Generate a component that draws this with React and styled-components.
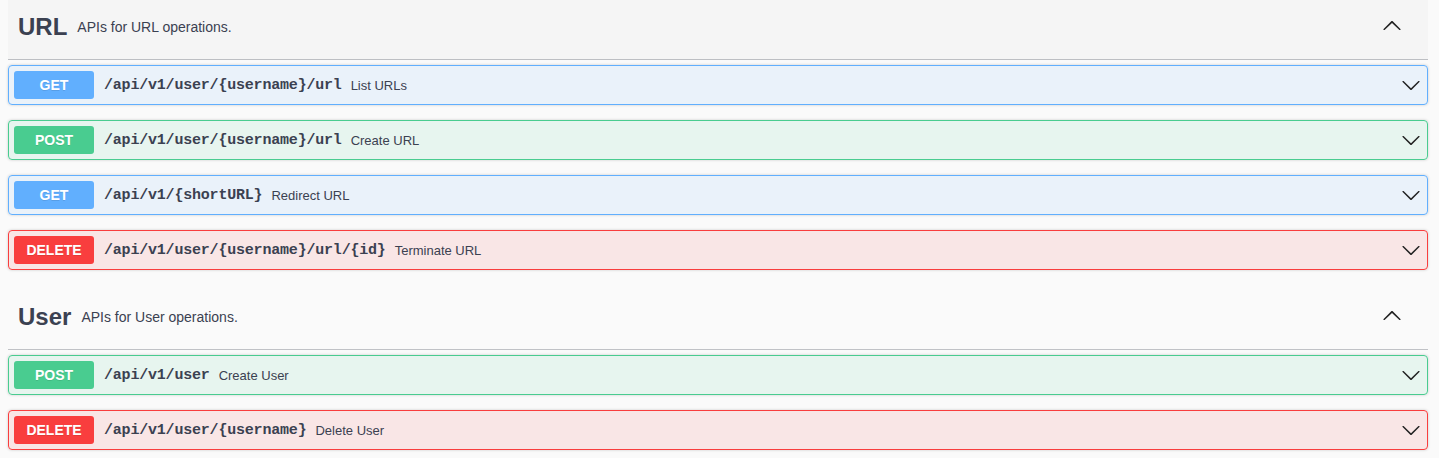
import React from "react";
import styled, { createGlobalStyle } from "styled-components";

const GlobalStyle = createGlobalStyle`
  html, body {
    margin: 0;
    padding: 0;
    background: #fafafa;
  }
`

const METHODS = {
  GET: { color: "#61affe", bg: "rgba(97, 175, 254, 0.1)" },
  POST: { color: "#49cc90", bg: "rgba(73, 204, 144, 0.1)" },
  DELETE: { color: "#f93e3e", bg: "rgba(249, 62, 62, 0.1)" },
}

const Page = styled.div`
  padding: 0 11px 0 8px;
  font-family: "Liberation Sans", Arial, sans-serif;
  color: #3b4151;
`
const Section = styled.section`
  & + & {
    padding-top: 5px;
  }
`
const TagHeader = styled.h3`
  display: flex;
  align-items: center;
  box-sizing: border-box;
  height: 60px;
  margin: 0 0 5px;
  padding: 0 20px 6px 10px;
  border-bottom: 1px solid rgba(59, 65, 81, 0.3);
  background: ${props => props.hovered ? "rgba(0, 0, 0, 0.02)" : "transparent"};
  cursor: pointer;
`
const TagName = styled.span`
  font-size: 24px;
  font-weight: 700;
  color: #3b4151;
`
const TagDesc = styled.small`
  flex: 1;
  padding: 0 10px;
  font-size: 14px;
  font-weight: 400;
  color: #3b4151;
`
const ExpandButton = styled.button`
  display: flex;
  border: none;
  background: none;
  padding: 0;
  margin: 0 6px 4px 0;
  cursor: pointer;
`
const Opblock = styled.div`
  margin: 0 0 15px;
  border: 1px solid ${props => METHODS[props.method].color};
  border-radius: 4px;
  background: ${props => METHODS[props.method].bg};
  box-shadow: 0 0 3px rgba(0, 0, 0, 0.19);
`
const Summary = styled.div`
  display: flex;
  align-items: center;
  padding: 5px;
  cursor: pointer;
`
const Method = styled.span`
  min-width: 80px;
  padding: 6px 0;
  border-radius: 3px;
  background: ${props => METHODS[props.method].color};
  color: #fff;
  font-size: 14px;
  line-height: 16px;
  font-weight: 700;
  text-align: center;
  text-shadow: 0 1px 0 rgba(0, 0, 0, 0.1);
`
const Path = styled.span`
  padding: 0 10px 0 10px;
  font-family: "Liberation Mono", "DejaVu Sans Mono", monospace;
  font-size: 15px;
  letter-spacing: -0.2px;
  font-weight: 700;
  color: #3b4151;
`
const Desc = styled.span`
  flex: 1;
  margin-left: -1px;
  font-size: 13px;
  color: #3b4151;
`
const Arrow = styled.svg`
  flex: none;
  margin-right: 1px;
  fill: #222;
`

const ChevronUp = () => (
  <svg width="20" height="20" viewBox="0 0 20 20" fill="#222">
    <path d="M17.418 14.908c.272.268.709.268.979 0s.271-.701 0-.969l-7.908-7.83c-.27-.268-.707-.268-.979 0l-7.908 7.83c-.27.268-.27.701 0 .969.271.268.709.268.979 0L10 7.92l7.418 6.988z" />
  </svg>
)

const ChevronDown = () => (
  <Arrow width="20" height="20" viewBox="0 0 20 20">
    <path d="M17.418 6.109c.272-.268.709-.268.979 0s.271.701 0 .969l-7.908 7.83c-.27.268-.707.268-.979 0l-7.908-7.83c-.27-.268-.27-.701 0-.969.271-.268.709-.268.979 0L10 13.25l7.418-7.141z" />
  </Arrow>
)

const sections = [
  {
    name: "URL",
    description: "APIs for URL operations.",
    hovered: true,
    ops: [
      { method: "GET", path: "/api/v1/user/{username}/url", summary: "List URLs" },
      { method: "POST", path: "/api/v1/user/{username}/url", summary: "Create URL" },
      { method: "GET", path: "/api/v1/{shortURL}", summary: "Redirect URL" },
      { method: "DELETE", path: "/api/v1/user/{username}/url/{id}", summary: "Terminate URL" },
    ],
  },
  {
    name: "User",
    description: "APIs for User operations.",
    hovered: false,
    ops: [
      { method: "POST", path: "/api/v1/user", summary: "Create User" },
      { method: "DELETE", path: "/api/v1/user/{username}", summary: "Delete User" },
    ],
  },
]

export default function App() {
  return (
    <Page>
      <GlobalStyle />
      {sections.map(section => (
        <Section key={section.name}>
          <TagHeader hovered={section.hovered}>
            <TagName>{section.name}</TagName>
            <TagDesc>{section.description}</TagDesc>
            <ExpandButton aria-label="collapse">
              <ChevronUp />
            </ExpandButton>
          </TagHeader>
          {section.ops.map(op => (
            <Opblock key={op.method + op.path} method={op.method}>
              <Summary>
                <Method method={op.method}>{op.method}</Method>
                <Path>{op.path}</Path>
                <Desc>{op.summary}</Desc>
                <ChevronDown />
              </Summary>
            </Opblock>
          ))}
        </Section>
      ))}
    </Page>
  )
}
